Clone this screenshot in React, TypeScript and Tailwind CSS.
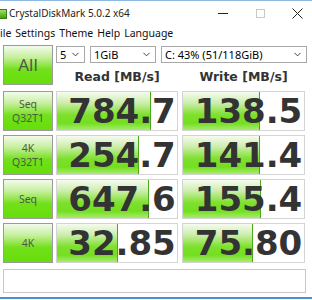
import { ChevronDown } from "lucide-react";

type Result = {
  top: string;
  bottom?: string;
  read: string;
  write: string;
  readBar: number;
  writeBar: number;
};

const results: Result[] = [
  { top: "Seq", bottom: "Q32T1", read: "784.7", write: "138.5", readBar: 94, writeBar: 77 },
  { top: "4K", bottom: "Q32T1", read: "254.7", write: "141.4", readBar: 82, writeBar: 77 },
  { top: "Seq", read: "647.6", write: "155.4", readBar: 92, writeBar: 78 },
  { top: "4K", read: "32.85", write: "75.80", readBar: 61, writeBar: 70 },
];

function Select({ value, width }: { value: string; width: string }) {
  return (
    <div
      className={`flex h-[17px] items-center justify-between border border-[#a8a8a8] bg-white pl-[3px] pr-[3px] text-[11px] text-black ${width}`}
    >
      <span className="leading-none">{value}</span>
      <ChevronDown size={11} strokeWidth={2} className="shrink-0 text-[#333]" />
    </div>
  );
}

function LabelButton({ top, bottom }: { top: string; bottom?: string }) {
  return (
    <div className="flex h-[40px] w-[50px] flex-col items-center justify-center border border-[#9a9a9a] bg-[linear-gradient(to_bottom,#f4fbee_0%,#c6ef9c_30%,#72e01a_62%,#66de0a_100%)] text-[10.5px] leading-[14px] text-[#4c5a44]">
      <span>{top}</span>
      {bottom && <span>{bottom}</span>}
    </div>
  );
}

function ValueCell({ value, bar, width }: { value: string; bar: number; width: string }) {
  return (
    <div className={`relative h-[40px] overflow-hidden border border-[#d4d4d4] bg-white ${width}`}>
      <div
        className="absolute left-0 top-0 h-full border-r border-[#4aa81a] bg-[linear-gradient(to_bottom,#f5fbef_0%,#cdeeae_28%,#7ee02c_60%,#74df20_82%,#a8ec70_100%)]"
        style={{ width: `${bar}px` }}
      />
      <div className="relative flex h-full items-center justify-center pl-[10px] font-['DejaVu_Sans',sans-serif] text-[34px] font-bold leading-none text-[#333]">
        {value}
      </div>
    </div>
  );
}

export default function App() {
  return (
    <div className="relative flex h-[300px] w-[312px] flex-col overflow-hidden bg-white font-['Noto_Sans','DejaVu_Sans',sans-serif]">
      <div className="h-px bg-[#8fb8e0]" />

      {/* title bar */}
      <div className="flex h-[25px] items-center">
        <div className="ml-[-4px] h-[10px] w-[11px] shrink-0 border border-[#3d7a1a] bg-[linear-gradient(to_bottom,#9fe060,#3fa010)]" />
        <span className="ml-[2px] text-[10px] text-[#222]">CrystalDiskMark 5.0.2 x64</span>
        <div className="ml-auto mr-[9px] flex w-[85px] shrink-0 items-center justify-between">
          <div className="h-px w-[10px] bg-[#222]" />
          <div className="h-[9px] w-[9px] border border-[#c8c8c8]" />
          <svg width="11" height="11" viewBox="0 0 11 11">
            <path d="M0.5 0.5 L10.5 10.5 M10.5 0.5 L0.5 10.5" stroke="#222" strokeWidth="1" />
          </svg>
        </div>
      </div>

      {/* menu bar */}
      <div className="flex h-[14px] items-center gap-[4px] text-[10.5px] leading-none text-[#111]">
        <span>ile</span>
        <span>Settings</span>
        <span>Theme</span>
        <span>Help</span>
        <span>Language</span>
      </div>

      {/* controls + headers */}
      <div className="ml-[3px] mt-[5px] flex">
        <div className="flex h-[40px] w-[50px] items-center justify-center border border-[#9a9a9a] bg-[linear-gradient(to_bottom,#f4fbee_0%,#c6ef9c_30%,#72e01a_62%,#66de0a_100%)] text-[17px] text-[#4c5a44]">
          All
        </div>
        <div className="ml-[3px] flex flex-col">
          <div className="mt-[1px] flex gap-[5px]">
            <Select value="5" width="w-[29px]" />
            <Select value="1GiB" width="w-[66px]" />
            <Select value="C: 43% (51/118GiB)" width="w-[146px]" />
          </div>
          <div className="mt-[5px] flex font-['DejaVu_Sans',sans-serif] text-[12.5px] font-bold text-[#333]">
            <div className="w-[122px] text-center">Read [MB/s]</div>
            <div className="ml-[4px] w-[123px] text-center">Write [MB/s]</div>
          </div>
        </div>
      </div>

      {/* results */}
      <div className="ml-[3px] mt-[4px] flex flex-col gap-[4px]">
        {results.map((r, i) => (
          <div key={i} className="flex">
            <LabelButton top={r.top} bottom={r.bottom} />
            <div className="ml-[3px]">
              <ValueCell value={r.read} bar={r.readBar} width="w-[122px]" />
            </div>
            <div className="ml-[4px]">
              <ValueCell value={r.write} bar={r.writeBar} width="w-[123px]" />
            </div>
          </div>
        ))}
      </div>

      {/* comment */}
      <div className="ml-[3px] mt-[6px] h-[24px] w-[303px] border border-[#c8c8c8] bg-white" />

      <div className="mt-auto mb-[1px] h-[2px] bg-[#4a90d9]" />
    </div>
  );
}
